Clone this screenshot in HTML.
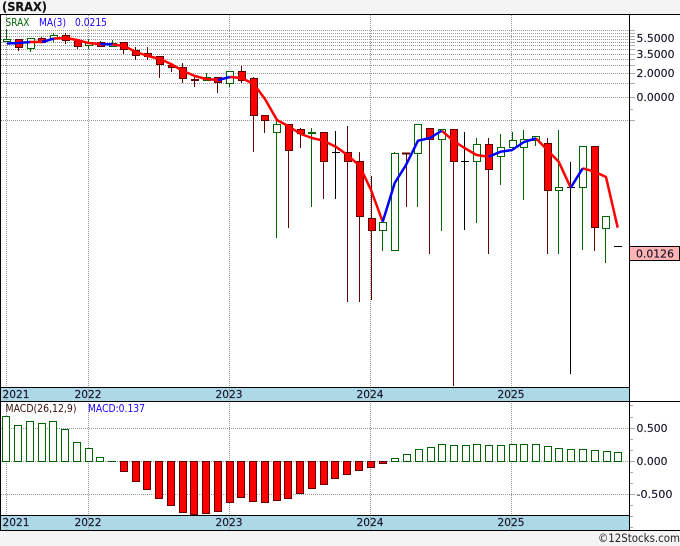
<!DOCTYPE html>
<html><head><meta charset="utf-8"><style>
html,body{margin:0;padding:0;background:#f4f4f4;width:680px;height:546px;overflow:hidden}
svg{display:block}
text{font-family:"DejaVu Sans",sans-serif;font-size:11px;fill:#14142a;stroke:#14142a;stroke-width:.15px}
.gr{stroke:#999;stroke-width:1;stroke-dasharray:1 1;fill:none}
.t{stroke:#aaa;stroke-width:1;fill:none}
.g rect{fill:#fff;stroke:#006400;stroke-width:1}
.r rect{fill:#f00;stroke:#600000;stroke-width:1}
.ma{fill:none;stroke-width:2.5;stroke-linejoin:round}
</style></head><body>
<svg width="680" height="546" viewBox="0 0 680 546" xmlns="http://www.w3.org/2000/svg">
<rect x="0" y="14" width="680" height="516" fill="#fff"/>
<text x="2" y="11" style="font-weight:bold;font-size:12.5px;fill:#111" textLength="45" lengthAdjust="spacingAndGlyphs">(SRAX)</text>
<rect x="1" y="387" width="628" height="14" fill="#add8e6"/>
<rect x="1" y="515" width="628" height="15" fill="#add8e6"/>
<path class="gr" d="M1 30.5H635M1 33.5H635M1 36.5H635M1 39.5H635M1 42.5H635M1 45.5H635M1 49.5H635M1 54.5H635M1 59.5H635M1 65.5H635M1 73.5H635M1 83.5H635M1 97.5H635M1 120.5H635M1 428.5H635M1 461.5H635M1 494.5H635"/>
<path class="gr" d="M6.5 15V530M88.5 15V530M229.5 15V530M370.5 15V530M511.5 15V530"/>
<path class="t" d="M630 30.5H635M630 33.5H635M630 36.5H635M630 39.5H635M630 42.5H635M630 45.5H635M630 49.5H635M630 54.5H635M630 59.5H635M630 65.5H635M630 73.5H635M630 83.5H635M630 97.5H635M630 109.5H633M630 120.5H635M630 405.5H633M630 417.5H633M630 428.5H635M630 439.5H633M630 450.5H633M630 461.5H635M630 472.5H633M630 483.5H633M630 494.5H635M630 505.5H633M630 516.5H633M630 527.5H633"/>
<text x="636.5" y="42" textLength="38" lengthAdjust="spacingAndGlyphs">5.5000</text><text x="636.5" y="58" textLength="38" lengthAdjust="spacingAndGlyphs">3.5000</text><text x="636.5" y="77" textLength="38" lengthAdjust="spacingAndGlyphs">2.0000</text><text x="636.5" y="101" textLength="38" lengthAdjust="spacingAndGlyphs">0.0000</text>
<text x="636.5" y="432" textLength="31" lengthAdjust="spacingAndGlyphs">0.500</text><text x="636.5" y="465" textLength="31" lengthAdjust="spacingAndGlyphs">0.000</text><text x="636.5" y="498" textLength="36" lengthAdjust="spacingAndGlyphs">-0.500</text>
<text x="2.5" y="398" textLength="27" lengthAdjust="spacingAndGlyphs">2021</text><text x="74.5" y="398" textLength="27" lengthAdjust="spacingAndGlyphs">2022</text><text x="215.5" y="398" textLength="27" lengthAdjust="spacingAndGlyphs">2023</text><text x="356.5" y="398" textLength="27" lengthAdjust="spacingAndGlyphs">2024</text><text x="497.5" y="398" textLength="27" lengthAdjust="spacingAndGlyphs">2025</text>
<text x="2.5" y="526" textLength="27" lengthAdjust="spacingAndGlyphs">2021</text><text x="74.5" y="526" textLength="27" lengthAdjust="spacingAndGlyphs">2022</text><text x="215.5" y="526" textLength="27" lengthAdjust="spacingAndGlyphs">2023</text><text x="356.5" y="526" textLength="27" lengthAdjust="spacingAndGlyphs">2024</text><text x="497.5" y="526" textLength="27" lengthAdjust="spacingAndGlyphs">2025</text>
<text x="5.5" y="26" style="font-size:10.5px;fill:#006400;stroke:none" textLength="24" lengthAdjust="spacingAndGlyphs">SRAX</text>
<text x="39" y="26" style="font-size:10.5px;fill:#1a00ff;stroke:none" textLength="27" lengthAdjust="spacingAndGlyphs">MA(3)</text>
<text x="75" y="26" style="font-size:10.5px;fill:#1a00ff;stroke:none" textLength="32" lengthAdjust="spacingAndGlyphs">0.0215</text>
<text x="5.5" y="412" style="font-size:10.5px;fill:#3a1010;stroke:none" textLength="71" lengthAdjust="spacingAndGlyphs">MACD(26,12,9)</text>
<text x="88" y="412" style="font-size:10.5px;fill:#1a00ff;stroke:none" textLength="57" lengthAdjust="spacingAndGlyphs">MACD:0.137</text>
<path fill="none" stroke="#006400" d="M6.5 29V42M30.5 38V52M53.5 33V42M88.5 39V49M112.5 40V47M206.5 73V80M229.5 71V87M276.5 120V238M311.5 128V207M382.5 222V251M394.5 152V250M417.5 124V207M441.5 129V231M476.5 138V223M500.5 134V185M512.5 132V147M523.5 130V200M535.5 136V146M558.5 130V254M582.5 146V250M605.5 216V263"/>
<path fill="none" stroke="#600000" d="M18.5 39V51M41.5 37V43M65.5 33V44M77.5 40V49M100.5 41V47M123.5 42V54M135.5 47V60M147.5 47V60M159.5 56V78M171.5 64V72M182.5 63V83M194.5 75V87M217.5 77V93M241.5 66V83M253.5 77V152M264.5 115V133M288.5 124V228M300.5 128V148M323.5 132V199M347.5 126V302M359.5 152V302M371.5 176V300M406.5 153V207M429.5 128V254M453.5 129V386M488.5 138V254M547.5 138V254M594.5 146V251"/>
<path fill="none" stroke="#000" d="M335.5 131V199M464.5 132V230M570.5 162V374M332 152.5H340M461 161.5H469M567 187.5H575M614 246.5H622"/>
<path fill="none" stroke="#600000" stroke-width="2" d="M191 80H199M402 153.5H410"/>
<path fill="none" stroke="#006400" stroke-width="2" d="M308 133H316"/>
<g class="g">
<rect x="3.5" y="39.5" width="7" height="2"/><rect x="27.5" y="38.5" width="7" height="10"/><rect x="50.5" y="35.5" width="7" height="3"/><rect x="85.5" y="42.5" width="7" height="3"/><rect x="109.5" y="43.5" width="7" height="3"/><rect x="203.5" y="77.5" width="7" height="3"/><rect x="226.5" y="71.5" width="7" height="12"/><rect x="273.5" y="124.5" width="7" height="8"/><rect x="379.5" y="222.5" width="7" height="8"/><rect x="391.5" y="153.5" width="7" height="97"/><rect x="414.5" y="124.5" width="7" height="29"/><rect x="438.5" y="129.5" width="7" height="10"/><rect x="473.5" y="144.5" width="7" height="17"/><rect x="497.5" y="147.5" width="7" height="9"/><rect x="509.5" y="140.5" width="7" height="7"/><rect x="520.5" y="139.5" width="7" height="8"/><rect x="532.5" y="136.5" width="7" height="4"/><rect x="555.5" y="187.5" width="7" height="3"/><rect x="579.5" y="146.5" width="7" height="41"/><rect x="602.5" y="216.5" width="7" height="12"/>
</g>
<g class="r">
<rect x="15.5" y="39.5" width="7" height="8"/><rect x="38.5" y="38.5" width="7" height="4"/><rect x="62.5" y="35.5" width="7" height="5"/><rect x="74.5" y="40.5" width="7" height="6"/><rect x="97.5" y="42.5" width="7" height="4"/><rect x="120.5" y="42.5" width="7" height="7"/><rect x="132.5" y="50.5" width="7" height="5"/><rect x="144.5" y="53.5" width="7" height="3"/><rect x="156.5" y="56.5" width="7" height="8"/><rect x="168.5" y="65.5" width="7" height="2"/><rect x="179.5" y="67.5" width="7" height="11"/><rect x="214.5" y="77.5" width="7" height="5"/><rect x="238.5" y="71.5" width="7" height="9"/><rect x="250.5" y="78.5" width="7" height="37"/><rect x="261.5" y="115.5" width="7" height="5"/><rect x="285.5" y="124.5" width="7" height="26"/><rect x="297.5" y="129.5" width="7" height="4"/><rect x="320.5" y="132.5" width="7" height="29"/><rect x="344.5" y="152.5" width="7" height="9"/><rect x="356.5" y="161.5" width="7" height="55"/><rect x="368.5" y="218.5" width="7" height="12"/><rect x="426.5" y="128.5" width="7" height="11"/><rect x="450.5" y="129.5" width="7" height="32"/><rect x="485.5" y="144.5" width="7" height="25"/><rect x="544.5" y="143.5" width="7" height="47"/><rect x="591.5" y="146.5" width="7" height="81"/>
</g>
<path class="ma" stroke="#f00" d="M30 42L42 42M54 38.5L66 38L77 40L88.5 43L100.5 44M112.5 44.5L124 46L136 52L148 56L160 59L171 64L183 71L195 76L206 79L218 80M230 77L241.7 78L253.7 84L265 99L277 120L288 126L300.7 134L312 138L323.5 140.7L335.7 146.7L347.5 155L359.7 166L371 190L382.7 221.7M441.7 130.7L453.7 141L464.5 148L476.5 155L488.7 156.7M536 138.3L548 150.7L558.7 161.7L570.7 187.7M582.7 168.3L594.7 171.7L606 177L617.7 227.7"/>
<path class="ma" stroke="#00f" d="M7 43.5L19 43L30 42M42 42L54 38.5M100.5 44L112.5 44.5M218 80L230 77M382.7 221.7L394.7 183L406 165L418 140.7L430 138L441.7 130.7M488.7 156.7L500.7 151.7L512 150L524 142L536 138.3M570.7 187.7L582.7 168.3"/>
<g class="g">
<rect x="2.5" y="416.5" width="7" height="45"/><rect x="14.5" y="425.5" width="7" height="36"/><rect x="26.5" y="421.5" width="7" height="40"/><rect x="38.5" y="423.5" width="7" height="38"/><rect x="49.5" y="421.5" width="7" height="40"/><rect x="61.5" y="429.5" width="7" height="32"/><rect x="73.5" y="442.5" width="7" height="19"/><rect x="85.5" y="448.5" width="7" height="13"/><rect x="96.5" y="457.5" width="7" height="4"/>
<rect x="391.5" y="458.5" width="7" height="3"/><rect x="403.5" y="454.5" width="7" height="7"/><rect x="415.5" y="449.5" width="7" height="12"/><rect x="427.5" y="447.5" width="7" height="14"/><rect x="438.5" y="444.5" width="7" height="17"/><rect x="450.5" y="445.5" width="7" height="16"/><rect x="462.5" y="445.5" width="7" height="16"/><rect x="473.5" y="444.5" width="7" height="17"/><rect x="485.5" y="445.5" width="7" height="16"/><rect x="497.5" y="445.5" width="7" height="16"/><rect x="509.5" y="444.5" width="7" height="17"/><rect x="520.5" y="444.5" width="7" height="17"/><rect x="532.5" y="444.5" width="7" height="17"/><rect x="544.5" y="446.5" width="7" height="15"/><rect x="555.5" y="448.5" width="7" height="13"/><rect x="567.5" y="449.5" width="7" height="12"/><rect x="579.5" y="449.5" width="7" height="12"/><rect x="591.5" y="450.5" width="7" height="11"/><rect x="603.5" y="451.5" width="7" height="10"/><rect x="614.5" y="452.5" width="7" height="9"/>
</g>
<path stroke="#006400" d="M108 461.5H116" fill="none"/>
<g class="r">
<rect x="120.5" y="461.5" width="7" height="10"/><rect x="132.5" y="461.5" width="7" height="20"/><rect x="143.5" y="461.5" width="7" height="28"/><rect x="155.5" y="461.5" width="7" height="37"/><rect x="167.5" y="461.5" width="7" height="44"/><rect x="179.5" y="461.5" width="7" height="51"/><rect x="190.5" y="461.5" width="7" height="53"/><rect x="202.5" y="461.5" width="7" height="52"/><rect x="214.5" y="461.5" width="7" height="50"/><rect x="226.5" y="461.5" width="7" height="41"/><rect x="237.5" y="461.5" width="7" height="36"/><rect x="249.5" y="461.5" width="7" height="40"/><rect x="261.5" y="461.5" width="7" height="41"/><rect x="273.5" y="461.5" width="7" height="39"/><rect x="284.5" y="461.5" width="7" height="37"/><rect x="296.5" y="461.5" width="7" height="32"/><rect x="308.5" y="461.5" width="7" height="27"/><rect x="320.5" y="461.5" width="7" height="23"/><rect x="331.5" y="461.5" width="7" height="17"/><rect x="343.5" y="461.5" width="7" height="13"/><rect x="355.5" y="461.5" width="7" height="9"/><rect x="367.5" y="461.5" width="7" height="6"/><rect x="379.5" y="461.5" width="7" height="2"/>
</g>
<path fill="none" stroke="#000" d="M0 14.5H680M0 387.5H629M0 401.5H680M0 515.5H629M0 530.5H680M.5 14V530M629.5 14V530"/>
<rect x="629.5" y="246.5" width="50" height="14" fill="#ffb3b3" stroke="#000"/>
<text x="636" y="257.5" textLength="38" lengthAdjust="spacingAndGlyphs">0.0126</text>
<text x="598" y="542" style="font-size:11.5px;fill:#222;stroke:none" textLength="82" lengthAdjust="spacingAndGlyphs">©12Stocks.com</text>
</svg>
</body></html>
